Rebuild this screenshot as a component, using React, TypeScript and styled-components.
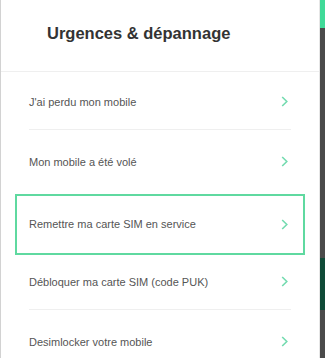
import React from "react";
import styled, { createGlobalStyle } from "styled-components";

const Global = createGlobalStyle`
  html, body { margin: 0; padding: 0; background: #ffffff; }
  body { font-family: "Liberation Sans", Arial, sans-serif; }
`;

const Page = styled.div`
  display: flex;
  width: 325px;
  height: 358px;
  overflow: hidden;
`;

const Panel = styled.section`
  flex: 1;
  display: flex;
  flex-direction: column;
  background: #ffffff;
  border-left: 1px solid #d2d2d2;
  border-right: 1px solid #e6e6e6;
`;

const Header = styled.header`
  flex: none;
  height: 72px;
  display: flex;
  align-items: center;
  padding-left: 46px;
  padding-bottom: 4px;
  box-sizing: border-box;
  border-bottom: 1px solid #efefef;
`;

const Title = styled.h2`
  margin: 0;
  font-size: 16.5px;
  font-weight: 700;
  color: #333333;
  letter-spacing: 0;
`;

const List = styled.ul`
  flex: none;
  list-style: none;
  margin: 0;
  padding: 0 14px;
  display: flex;
  flex-direction: column;
`;

const Item = styled.li<{ $focused?: boolean }>`
  flex: none;
  height: ${(p) => (p.$focused ? 61 : 60)}px;
  box-sizing: border-box;
  border: 2px solid ${(p) => (p.$focused ? "#5fd9a0" : "transparent")};
  margin-top: ${(p) => (p.$focused ? 2 : 0)}px;
  margin-bottom: ${(p) => (p.$focused ? -3 : 0)}px;
  padding: 0 12px;
`;

const Row = styled.div<{ $divider?: boolean }>`
  height: 100%;
  display: flex;
  align-items: center;
  justify-content: space-between;
  box-sizing: border-box;
  border-bottom: 1px solid ${(p) => (p.$divider ? "#efefef" : "transparent")};
  padding-right: 3px;
`;

const Label = styled.span`
  font-size: 11px;
  color: #555555;
`;

const Chevron = styled.svg`
  width: 7px;
  height: 11px;
  flex: none;
`;

const Strip = styled.aside`
  width: 5px;
  display: flex;
  flex-direction: column;
  background: #4a4a4a;
`;

const StripBand = styled.div<{ $color: string; $h: number }>`
  height: ${(p) => p.$h}px;
  background: ${(p) => p.$color};
  flex: none;
`;

const items = [
  { label: "J'ai perdu mon mobile", divider: true },
  { label: "Mon mobile a été volé", divider: false },
  { label: "Remettre ma carte SIM en service", divider: false, focused: true },
  { label: "Débloquer ma carte SIM (code PUK)", divider: true },
  { label: "Desimlocker votre mobile", divider: false },
];

export default function App() {
  return (
    <>
      <Global />
      <Page>
        <Panel>
          <Header>
            <Title>Urgences &amp; dépannage</Title>
          </Header>
          <List>
            {items.map((it) => (
              <Item key={it.label} $focused={it.focused}>
                <Row $divider={it.divider}>
                  <Label>{it.label}</Label>
                  <Chevron viewBox="0 0 7 11">
                    <path d="M1.2 1 L5.8 5.5 L1.2 10" fill="none" stroke="#74dbb0" strokeWidth="1.6" />
                  </Chevron>
                </Row>
              </Item>
            ))}
          </List>
        </Panel>
        <Strip>
          <StripBand $color="#3fda98" $h={28} />
          <StripBand $color="#4a4a4a" $h={230} />
          <StripBand $color="#0f4a37" $h={52} />
        </Strip>
      </Page>
    </>
  );
}
